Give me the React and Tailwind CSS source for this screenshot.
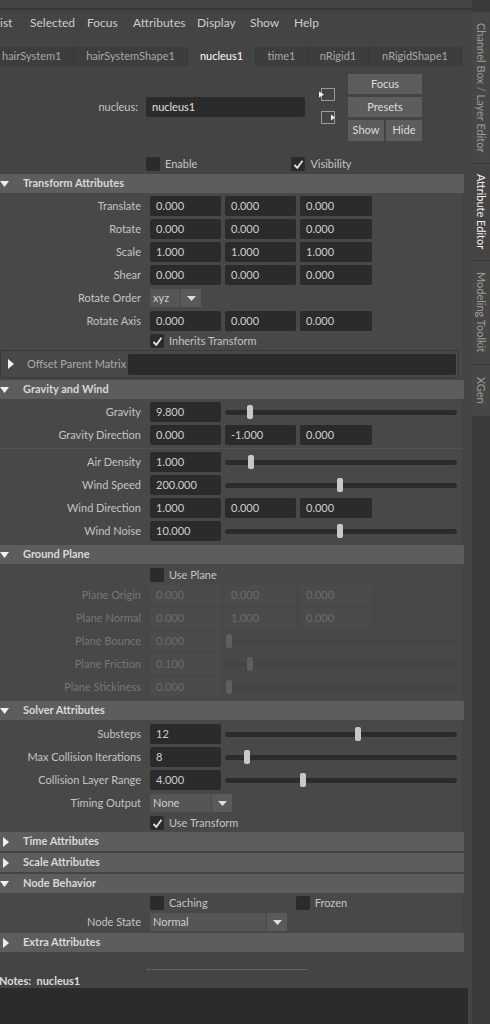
import React from "react";

const font = "font-['Lato','Liberation_Sans',sans-serif]";

function Field({ v, dim, w = "w-[71px]" }) {
  return (
    <div
      className={`${w} h-[20px] rounded-[2px] flex items-center px-[6px] text-[11px] ${
        dim ? "bg-[#4b4b4b] text-[#6c6c6c]" : "bg-[#2b2b2b] text-[#cfcfcf]"
      }`}
    >
      {v}
    </div>
  );
}

function Row({ label, dim, children, h = "h-[20px]" }) {
  return (
    <div className={`flex items-center ${h}`}>
      <div
        className={`w-[141px] shrink-0 text-right text-[11px] ${
          dim ? "text-[#767676]" : "text-[#c4c4c4]"
        }`}
      >
        {label}
      </div>
      <div className="ml-[9px] flex items-center gap-[4px] flex-1">{children}</div>
    </div>
  );
}

function Slider({ pos, dim }) {
  return (
    <div className="relative flex-1 h-[20px] flex items-center mr-[5px]">
      <div className={`w-full h-[5px] rounded-[3px] ${dim ? "bg-[#444444]" : "bg-[#2b2b2b]"}`} />
      <div
        className={`absolute top-[3px] w-[6px] h-[14px] rounded-[2px] ${
          dim ? "bg-[#5e5e5e]" : "bg-[#c8c8c8]"
        }`}
        style={{ left: pos }}
      />
    </div>
  );
}

function Check({ on }) {
  return (
    <div className="w-[14px] h-[14px] rounded-[2px] bg-[#2b2b2b] flex items-center justify-center shrink-0">
      {on && (
        <svg width="11" height="11" viewBox="0 0 11 11">
          <path d="M1.5 6 L4.3 8.8 L9.5 1.8" fill="none" stroke="#e6e6e6" strokeWidth="1.8" />
        </svg>
      )}
    </div>
  );
}

function CheckRow({ label, on, left = "ml-[150px]", children }) {
  return (
    <div className={`flex items-center h-[14px] ${left}`}>
      <Check on={on} />
      <span className="ml-[5px] text-[11px] text-[#c4c4c4]">{label}</span>
      {children}
    </div>
  );
}

function Dropdown({ v, w }) {
  return (
    <div className="flex h-[18px] text-[11px] text-[#d0d0d0]">
      <div className={`${w} bg-[#555555] flex items-center px-[3px]`}>{v}</div>
      <div className="w-[20px] ml-[1px] bg-[#5a5a5a] flex items-center justify-center">
        <svg width="9" height="5" viewBox="0 0 9 5">
          <path d="M0 0 H9 L4.5 5 Z" fill="#dddddd" />
        </svg>
      </div>
    </div>
  );
}

function Header({ title, open, mt = "" }) {
  return (
    <div className={`w-[464px] h-[19px] bg-[#5d5d5d] flex items-center ${mt}`}>
      <div className="w-[23px] shrink-0 flex items-center">
        {open ? (
          <svg width="9" height="6" viewBox="0 0 9 6">
            <path d="M0 0 H9 L4.5 6 Z" fill="#f0f0f0" />
          </svg>
        ) : (
          <svg width="6" height="10" viewBox="0 0 6 10" className="ml-[3px]">
            <path d="M0 0 L6 5 L0 10 Z" fill="#f0f0f0" />
          </svg>
        )}
      </div>
      <span className="text-[11px] font-bold text-[#d8d8d8]">{title}</span>
    </div>
  );
}

function Body({ children, cls = "" }) {
  return <div className={`w-[462px] bg-[#484848] flex flex-col ${cls}`}>{children}</div>;
}

function NodeIcon({ right }) {
  return (
    <svg width="16" height="13" viewBox="0 0 16 13">
      <rect x="2.5" y="0.5" width="13" height="12" fill="none" stroke="#9a9a9a" />
      {right ? (
        <path d="M12 3.5 L16 6.5 L12 9.5 Z" fill="#f0f0f0" />
      ) : (
        <path d="M0 3.5 L5 6.5 L0 9.5 Z" fill="#f0f0f0" />
      )}
    </svg>
  );
}

const menu = [
  ["ist", "w-[30px]"],
  ["Selected", "w-[57px]"],
  ["Focus", "w-[46px]"],
  ["Attributes", "w-[64px]"],
  ["Display", "w-[53px]"],
  ["Show", "w-[44px]"],
  ["Help", "w-[40px]"],
];

const tabs = [
  ["hairSystem1", "w-[74px] justify-start pl-[2px]", false],
  ["hairSystemShape1", "w-[114px] justify-center", false],
  ["nucleus1", "w-[68px] justify-center", true],
  ["time1", "w-[52px] justify-center", false],
  ["nRigid1", "w-[61px] justify-center", false],
  ["nRigidShape1", "w-[93px] justify-center", false],
];

const sideTabs = [
  ["Channel Box / Layer Editor", "h-[152px]", false],
  ["Attribute Editor", "h-[97px]", true],
  ["Modeling Toolkit", "h-[104px]", false],
  ["XGen", "h-[52px]", false],
];

export default function App() {
  return (
    <div className={`w-[490px] h-[1024px] overflow-hidden flex bg-[#444444] ${font}`}>
      <div className="w-[472px] flex flex-col">
        <div className="h-[10px] shrink-0 bg-[#444444] border-b-2 border-[#383838]" />

        {/* menu */}
        <div className="h-[25px] shrink-0 flex items-center text-[12px] text-[#cccccc]">
          {menu.map(([m, w]) => (
            <span key={m} className={`${w} shrink-0`}>
              {m}
            </span>
          ))}
        </div>

        {/* tabs */}
        <div className="mt-[12px] h-[19px] shrink-0 flex">
          {tabs.map(([t, w, active]) => (
            <div
              key={t}
              className={`${w} shrink-0 flex items-center text-[11px] border-r border-[#383838] ${
                active ? "bg-[#444444] text-[#ffffff]" : "bg-[#3d3d3d] text-[#a8a8a8]"
              }`}
            >
              {t}
            </div>
          ))}
        </div>

        {/* node name */}
        <div className="flex pt-[8px] shrink-0">
          <div className="w-[138px] mt-[23px] h-[20px] leading-[20px] text-right text-[11px] text-[#c4c4c4]">
            nucleus:
          </div>
          <div className="ml-[8px] mt-[23px] w-[159px] h-[20px] bg-[#2b2b2b] rounded-[2px] flex items-center px-[6px] text-[11px] text-[#e0e0e0]">
            nucleus1
          </div>
          <div className="ml-[14px] mt-[14px] flex flex-col gap-[10px]">
            <NodeIcon />
            <NodeIcon right />
          </div>
          <div className="ml-[13px] w-[74px] flex flex-col gap-[3px] text-[11px] text-[#dcdcdc]">
            <div className="h-[20px] bg-[#5d5d5d] flex items-center justify-center">Focus</div>
            <div className="h-[20px] bg-[#5d5d5d] flex items-center justify-center">Presets</div>
            <div className="h-[21px] flex gap-[2px]">
              <div className="w-[36px] bg-[#5d5d5d] flex items-center justify-center">Show</div>
              <div className="flex-1 bg-[#5d5d5d] flex items-center justify-center">Hide</div>
            </div>
          </div>
        </div>

        <div className="mt-[16px] mb-[3px] shrink-0">
          <CheckRow label="Enable" left="ml-[146px]">
            <div className="ml-[94px] flex items-center">
              <Check on />
              <span className="ml-[5px] text-[11px] text-[#c4c4c4]">Visibility</span>
            </div>
          </CheckRow>
        </div>

        {/* Transform */}
        <Header title="Transform Attributes" open />
        <Body cls="pt-[3px] gap-[3px]">
          <Row label="Translate">
            <Field v="0.000" />
            <Field v="0.000" />
            <Field v="0.000" w="w-[72px]" />
          </Row>
          <Row label="Rotate">
            <Field v="0.000" />
            <Field v="0.000" />
            <Field v="0.000" w="w-[72px]" />
          </Row>
          <Row label="Scale">
            <Field v="1.000" />
            <Field v="1.000" />
            <Field v="1.000" w="w-[72px]" />
          </Row>
          <Row label="Shear">
            <Field v="0.000" />
            <Field v="0.000" />
            <Field v="0.000" w="w-[72px]" />
          </Row>
          <Row label="Rotate Order">
            <Dropdown v="xyz" w="w-[30px]" />
          </Row>
          <Row label="Rotate Axis">
            <Field v="0.000" />
            <Field v="0.000" />
            <Field v="0.000" w="w-[72px]" />
          </Row>
          <CheckRow label="Inherits Transform" on />
          <div className="mt-[-1px] mb-[1px] w-[459px] h-[28px] border border-[#3a3a3a] rounded-[2px] flex items-center">
            <svg width="6" height="10" viewBox="0 0 6 10" className="ml-[7px]">
              <path d="M0 0 L6 5 L0 10 Z" fill="#f0f0f0" />
            </svg>
            <span className="ml-[13px] text-[11px] text-[#aaaaaa]">Offset Parent Matrix</span>
            <div className="ml-[2px] flex-1 mr-[2px] h-[21px] bg-[#2b2b2b] rounded-[2px]" />
          </div>
        </Body>

        {/* Gravity */}
        <Header title="Gravity and Wind" open mt="mt-[1px]" />
        <Body cls="pt-[3px] pb-[4px]">
          <div className="flex flex-col gap-[3px]">
            <Row label="Gravity">
              <Field v="9.800" />
              <Slider pos={22} />
            </Row>
            <Row label="Gravity Direction">
              <Field v="0.000" />
              <Field v="-1.000" />
              <Field v="0.000" w="w-[72px]" />
            </Row>
          </div>
          <div className="my-[3px] h-[1px] bg-[#515151]" />
          <div className="flex flex-col gap-[3px]">
            <Row label="Air Density">
              <Field v="1.000" />
              <Slider pos={23} />
            </Row>
            <Row label="Wind Speed">
              <Field v="200.000" />
              <Slider pos={112} />
            </Row>
            <Row label="Wind Direction">
              <Field v="1.000" />
              <Field v="0.000" />
              <Field v="0.000" w="w-[72px]" />
            </Row>
            <Row label="Wind Noise">
              <Field v="10.000" />
              <Slider pos={112} />
            </Row>
          </div>
        </Body>

        {/* Ground plane */}
        <Header title="Ground Plane" open />
        <Body cls="pt-[4px] pb-[4px] gap-[3px]">
          <CheckRow label="Use Plane" />
          <Row label="Plane Origin" dim>
            <Field v="0.000" dim />
            <Field v="0.000" dim />
            <Field v="0.000" dim w="w-[72px]" />
          </Row>
          <Row label="Plane Normal" dim>
            <Field v="0.000" dim />
            <Field v="1.000" dim />
            <Field v="0.000" dim w="w-[72px]" />
          </Row>
          <Row label="Plane Bounce" dim>
            <Field v="0.000" dim />
            <Slider pos={1} dim />
          </Row>
          <Row label="Plane Friction" dim>
            <Field v="0.100" dim />
            <Slider pos={22} dim />
          </Row>
          <Row label="Plane Stickiness" dim>
            <Field v="0.000" dim />
            <Slider pos={1} dim />
          </Row>
        </Body>

        {/* Solver */}
        <Header title="Solver Attributes" open />
        <Body cls="pt-[4px] pb-[2px] gap-[3px]">
          <Row label="Substeps">
            <Field v="12" />
            <Slider pos={130} />
          </Row>
          <Row label="Max Collision Iterations">
            <Field v="8" />
            <Slider pos={19} />
          </Row>
          <Row label="Collision Layer Range">
            <Field v="4.000" />
            <Slider pos={75} />
          </Row>
          <Row label="Timing Output">
            <Dropdown v="None" w="w-[61px]" />
          </Row>
          <CheckRow label="Use Transform" on />
        </Body>

        <Header title="Time Attributes" />
        <Header title="Scale Attributes" mt="mt-[2px]" />
        <Header title="Node Behavior" open mt="mt-[2px]" />
        <Body cls="pt-[3px] pb-[2px] gap-[3px]">
          <CheckRow label="Caching">
            <div className="ml-[88px] flex items-center">
              <Check />
              <span className="ml-[5px] text-[11px] text-[#c4c4c4]">Frozen</span>
            </div>
          </CheckRow>
          <Row label="Node State" h="h-[18px]">
            <Dropdown v="Normal" w="w-[116px]" />
          </Row>
        </Body>
        <Header title="Extra Attributes" />

        <div className="mt-[17px] ml-[147px] w-[160px] border-t border-dotted border-[#7a7a7a]" />
        <div className="mt-[4px] h-[14px] flex items-center text-[11px] font-bold text-[#dcdcdc] -ml-[1px]">
          Notes:&nbsp; nucleus1
        </div>
        <div className="w-[468px] flex-1 bg-[#2b2b2b]" />
      </div>

      {/* right side tabs */}
      <div className="w-[18px] shrink-0 bg-[#3a3a3a] flex flex-col pt-[12px]">
        {sideTabs.map(([t, h, active]) => (
          <div
            key={t}
            className={`${h} shrink-0 flex items-center justify-center border-b border-[#363636] ${
              active ? "bg-[#444444] text-[#f2f2f2]" : "bg-[#474747] text-[#9c9c9c]"
            }`}
          >
            <span className="[writing-mode:vertical-rl] text-[11px] whitespace-nowrap">{t}</span>
          </div>
        ))}
      </div>
    </div>
  );
}
